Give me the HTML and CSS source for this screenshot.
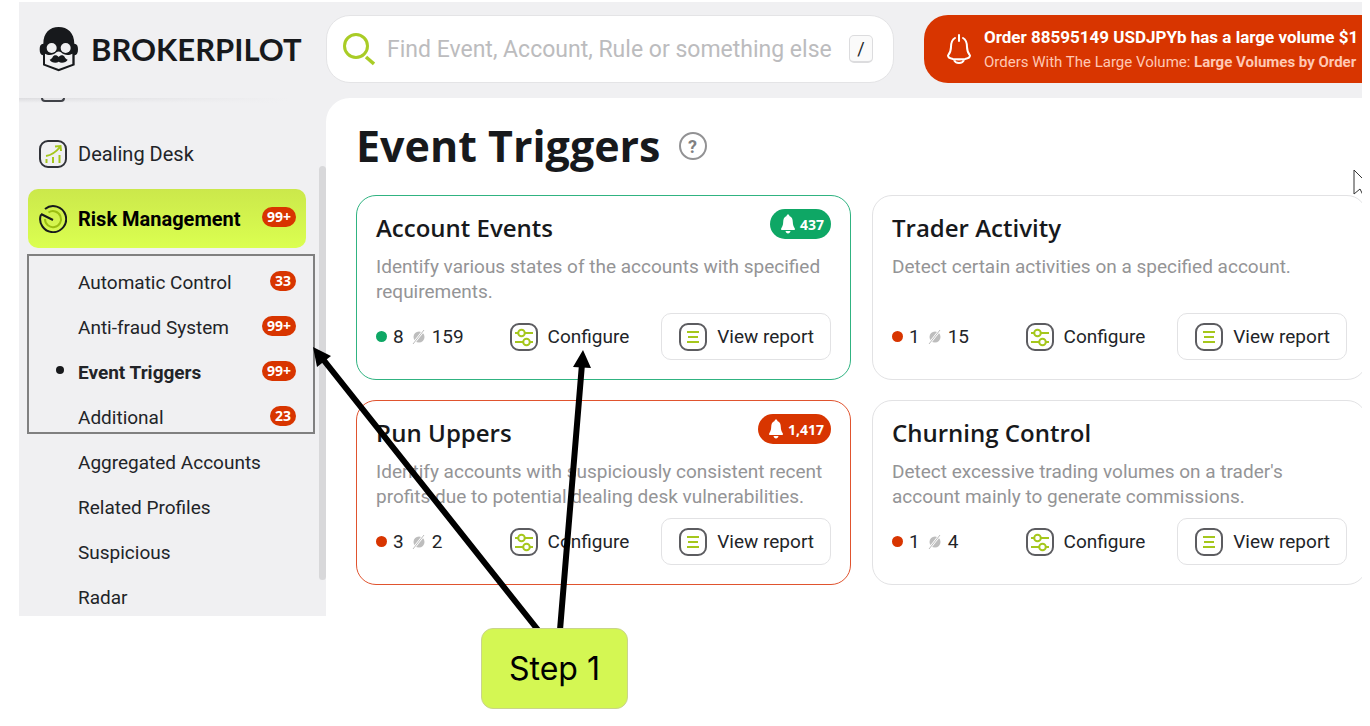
FILE: index.html
```html
<!doctype html>
<html lang="en">

<head>
    <title>Event Triggers</title>
    <meta charset="UTF-8">
    <link rel="stylesheet" href="styles.css">
</head>

<body>
    <!-- shared icons -->
    <svg class="sprite" width="0" height="0" aria-hidden="true">
        <symbol id="configure" viewBox="0 0 28 28">
            <rect x="1" y="1" width="26" height="26" rx="8" fill="#fff" stroke="#5c5c60" stroke-width="2" />
            <g fill="none" stroke="#a5c71c" stroke-width="2">
                <path d="M5 10h3M15 10h8M5 19h8M20 19h3" />
                <circle cx="11.5" cy="10" r="3.3" />
                <circle cx="16.5" cy="19" r="3.3" />
            </g>
        </symbol>
        <symbol id="report" viewBox="0 0 28 28">
            <rect x="1" y="1" width="26" height="26" rx="8" fill="#fff" stroke="#5c5c60" stroke-width="2" />
            <path d="M8 9h12M9 14h10M8 19h12" stroke="#a5c71c" stroke-width="2" />
        </symbol>
        <symbol id="off" viewBox="0 0 14 16">
            <circle cx="7" cy="8" r="5.5" fill="#bdbdbd" />
            <path d="M1 15L12 1" stroke="#fff" stroke-width="2.4" />
            <path d="M1 15L12 1" stroke="#bdbdbd" stroke-width="1" />
        </symbol>
        <symbol id="bell" viewBox="0 0 14 20">
            <path d="M7 0.5c1 0 1.4.7 1.4 1.6C11 3 11.7 5.5 11.8 8c.1 3 .7 4.500 2 6.200V16H.2v-1.800C1.500 12.500 2.100 11 2.200 8 2.300 5.500 3 3 5.600 2.100 5.600 1.200 6 .5 7 .5zM4.500 17h5c-.3 1.500-1.200 2.400-2.500 2.400S4.800 18.500 4.500 17z" fill="#fff" />
        </symbol>
    </svg>

    <div class="app">
        <header class="topbar">
            <a class="brand" href="#">
                <svg width="40" height="46" viewBox="118 76 120 136" aria-hidden="true">
                    <path d="M131 128C131 96 150 78 177 78s47 18 47 50c8 1 11 6 11 17s-3 17-10 18v30l-48 18-47-18v-30c-7-1-10-7-10-18s3-16 11-17z" fill="#17191c" />
                    <path d="M136 158c10 6 25 5 34-4 4-3 10-3 14 0 9 9 24 10 34 4v31l-41 15-41-15z" fill="#f0f0f2" />
                    <circle cx="156" cy="141" r="15" fill="#f0f0f2" />
                    <circle cx="198" cy="141" r="15" fill="#f0f0f2" />
                    <path d="M177 168c5-7 15-7 18 0 2 4 4 6 9 8-4 9-20 12-27 6-7 6-23 3-27-6 5-2 7-4 9-8 3-7 13-7 18 0z" fill="#17191c" />
                </svg>
                <span>BROKERPILOT</span>
            </a>
            <label class="search">
                <svg width="32" height="34" viewBox="0 0 32 34" fill="none" stroke="#a9cc26" stroke-width="3" aria-hidden="true">
                    <circle cx="13" cy="14" r="11.500" />
                    <path d="M23 25l8 7" stroke-width="3.500" />
                </svg>
                <input type="text" placeholder="Find Event, Account, Rule or something else" aria-label="Search">
                <kbd>/</kbd>
            </label>
            <div class="alert">
                <svg width="24" height="30" viewBox="0 0 24 30" fill="none" stroke="#fff" stroke-width="2" stroke-linecap="round" stroke-linejoin="round" aria-hidden="true">
                    <path d="M12 1v6M8 4C4.500 6 4 9 4 13c0 4-1 6-3 8.500C1 24 3 24.500 6 25c4 .5 8 .5 12 0 3-.5 5-1 5-3.500-2-2.500-3-4.500-3-8.500 0-4-.5-7-4-9M7 26c1.500 4 8.500 4 10 0" />
                </svg>
                <div class="alert-text">
                    <p class="alert-title">Order 88595149 USDJPYb has a large volume $1</p>
                    <p class="alert-sub">Orders With The Large Volume: <b>Large Volumes by Order</b></p>
                </div>
            </div>
        </header>

        <nav class="sidebar">
            <span class="peek"></span>
            <a class="item" href="#">
                <svg width="28" height="28" viewBox="0 0 28 28" fill="none" aria-hidden="true">
                    <rect x="1" y="1" width="26" height="26" rx="8" stroke="#303238" stroke-width="2" />
                    <path d="M7.500 23v-4M14 23v-6M20.500 23v-8M7 16c6-1 10-4 14-9M16 6.500l5.500-.5.5 5" stroke="#a5c71c" stroke-width="2" />
                </svg>
                <span>Dealing Desk</span>
            </a>
            <a class="item active" href="#">
                <svg width="28" height="28" viewBox="0 0 28 28" fill="none" aria-hidden="true">
                    <path d="M9.500 7.500A8 8 0 1 1 6 14" stroke="#9cbf12" stroke-width="2" />
                    <path d="M6 4a13 13 0 1 1-4 5.500M2 9l12 6" stroke="#17191c" stroke-width="2" />
                </svg>
                <span>Risk Management</span>
                <i class="count">99+</i>
            </a>
            <ul class="sub">
                <li><a href="#">Automatic Control <i class="count">33</i></a></li>
                <li><a href="#">Anti-fraud System <i class="count">99+</i></a></li>
                <li class="current"><a href="#">Event Triggers <i class="count">99+</i></a></li>
                <li><a href="#">Additional <i class="count">23</i></a></li>
                <li><a href="#">Aggregated Accounts</a></li>
                <li><a href="#">Related Profiles</a></li>
                <li><a href="#">Suspicious</a></li>
                <li><a href="#">Radar</a></li>
            </ul>
            <span class="scrollbar"></span>
        </nav>

        <main class="content">
            <div class="heading">
                <h1>Event Triggers</h1>
                <button class="help" type="button">?</button>
            </div>
            <div class="cards">
                <section class="card green">
                    <div class="card-top">
                        <h2>Account Events</h2>
                        <span class="pill"><svg width="14" height="20"><use href="#bell" /></svg>437</span>
                    </div>
                    <p>Identify various states of the accounts with specified requirements.</p>
                    <div class="card-bottom">
                        <div class="stats"><i class="dot"></i><span>8</span><svg width="14" height="16"><use href="#off" /></svg><span>159</span></div>
                        <button class="btn" type="button"><svg width="28" height="28"><use href="#configure" /></svg>Configure</button>
                        <button class="btn outlined" type="button"><svg width="28" height="28"><use href="#report" /></svg>View report</button>
                    </div>
                </section>
                <section class="card">
                    <div class="card-top">
                        <h2>Trader Activity</h2>
                    </div>
                    <p>Detect certain activities on a specified account.</p>
                    <div class="card-bottom">
                        <div class="stats"><i class="dot"></i><span>1</span><svg width="14" height="16"><use href="#off" /></svg><span>15</span></div>
                        <button class="btn" type="button"><svg width="28" height="28"><use href="#configure" /></svg>Configure</button>
                        <button class="btn outlined" type="button"><svg width="28" height="28"><use href="#report" /></svg>View report</button>
                    </div>
                </section>
                <section class="card red">
                    <div class="card-top">
                        <h2>Run Uppers</h2>
                        <span class="pill"><svg width="14" height="20"><use href="#bell" /></svg>1,417</span>
                    </div>
                    <p>Identify accounts with suspiciously consistent recent profits due to potential dealing desk vulnerabilities.</p>
                    <div class="card-bottom">
                        <div class="stats"><i class="dot"></i><span>3</span><svg width="14" height="16"><use href="#off" /></svg><span>2</span></div>
                        <button class="btn" type="button"><svg width="28" height="28"><use href="#configure" /></svg>Configure</button>
                        <button class="btn outlined" type="button"><svg width="28" height="28"><use href="#report" /></svg>View report</button>
                    </div>
                </section>
                <section class="card">
                    <div class="card-top">
                        <h2>Churning Control</h2>
                    </div>
                    <p>Detect excessive trading volumes on a trader's account mainly to generate commissions.</p>
                    <div class="card-bottom">
                        <div class="stats"><i class="dot"></i><span>1</span><svg width="14" height="16"><use href="#off" /></svg><span>4</span></div>
                        <button class="btn" type="button"><svg width="28" height="28"><use href="#configure" /></svg>Configure</button>
                        <button class="btn outlined" type="button"><svg width="28" height="28"><use href="#report" /></svg>View report</button>
                    </div>
                </section>
            </div>
        </main>
    </div>

    <!-- tutorial marks over the app -->
    <svg class="marks" width="1362" height="640" viewBox="0 0 1362 640" aria-hidden="true">
        <rect x="28" y="255" width="286" height="178" fill="none" stroke="#808080" stroke-width="2" />
        <path d="M538 630L322 358M560 630L582 364" stroke="#000" stroke-width="6" />
        <path d="M313 347l18 9-14 11zM583 350l8 18-18-1z" />
        <path d="M1354 170v24l6-5 4 8 4-2-4-8h7z" fill="#fff" stroke="#333" stroke-width="1" />
    </svg>
    <div class="step">Step 1</div>
</body>

</html>
```
FILE: styles.css
```css
* {
    box-sizing: border-box;
}

body {
    margin: 0;
    padding: 2px 8px 0 19px;
    background: #fff;
    color: #222428;
    font-family: Roboto, "Liberation Sans", sans-serif;
    font-size: 20px;
}

a {
    color: inherit;
    text-decoration: none;
}

h1, h2, p, ul {
    margin: 0;
    padding: 0;
}

h1, h2 {
    font-family: "Open Sans", sans-serif;
    color: #17191c;
}

svg {
    flex: none;
}

.sprite {
    position: absolute;
}

.app {
    display: grid;
    grid-template-columns: 307px minmax(0, 1fr);
    background: #f0f0f2;
    overflow: hidden;
}

/* top bar */
.topbar {
    grid-column: 1 / 3;
    display: flex;
    align-items: center;
    padding: 13px 0 15px;
}

.brand {
    flex: 0 0 307px;
    display: flex;
    align-items: center;
    gap: 12px;
    padding-left: 20px;
    font: bold 31px Lato, sans-serif;
    color: #17191c;
}

.search {
    flex: 0 0 568px;
    display: flex;
    align-items: center;
    height: 68px;
    padding: 0 20px 0 16px;
    border: 1px solid #e4e4e6;
    border-radius: 24px;
    background: #fff;
}

.search input {
    flex: 1;
    min-width: 0;
    margin-left: 12px;
    padding: 0;
    border: 0;
    outline: 0;
    font: 23px Roboto, sans-serif;
}

.search input::placeholder {
    color: #bcbcbe;
}

.search kbd {
    width: 24px;
    border: 1px solid #dcdcde;
    border-bottom-width: 2px;
    border-radius: 5px;
    background: #fafafa;
    font: 18px/25px Roboto, sans-serif;
    text-align: center;
}

.alert {
    flex: 1;
    display: flex;
    align-items: center;
    gap: 13px;
    min-width: 0;
    height: 68px;
    margin-left: 30px;
    padding-left: 23px;
    border-radius: 24px 0 0 24px;
    background: #d83500;
    color: #fff;
    white-space: nowrap;
    overflow: hidden;
}

.alert-title {
    font-size: 17px;
    line-height: 21px;
    font-weight: bold;
}

.alert-sub {
    padding-top: 4px;
    font-size: 15px;
    line-height: 20px;
    color: #ffc8b4;
}

/* sidebar */
.sidebar {
    position: relative;
    padding: 26px 20px 0 9px;
    background: linear-gradient(90deg, transparent, #f0f0f2 270px), linear-gradient(#dcdcdf, #f0f0f2 5px);
}

.peek {
    position: absolute;
    top: 0;
    left: 22px;
    width: 24px;
    height: 4px;
    border: 2px solid #404248;
    border-top: 0;
    border-radius: 0 0 8px 8px;
}

.item {
    display: flex;
    align-items: center;
    gap: 11px;
    height: 59px;
    margin-bottom: 6px;
    padding: 0 10px 0 11px;
    border-radius: 10px;
}

.item.active {
    background: linear-gradient(#cbe84b, #dbff50);
    color: #000;
    font-weight: bold;
}

.count {
    margin: 0 0 3px auto;
    padding: 0 5px;
    border-radius: 10px;
    background: #d83500;
    color: #fff;
    font: bold 14px/20px "Open Sans", sans-serif;
}

.sub {
    margin: 12px 0 -5px;
    list-style: none;
    font-size: 19px;
}

.sub a {
    display: flex;
    align-items: center;
    height: 45px;
    padding: 0 10px 0 50px;
}

.current {
    position: relative;
    font-weight: bold;
}

.current::before {
    content: "";
    position: absolute;
    top: 16px;
    left: 28px;
    width: 8px;
    height: 8px;
    border-radius: 50%;
    background: #17191c;
}

.scrollbar {
    position: absolute;
    top: 68px;
    right: 0;
    bottom: 36px;
    width: 7px;
    border-radius: 4px;
    background: #d8d8da;
}

/* content */
.content {
    padding: 21px 0 31px 30px;
    border-top-left-radius: 24px;
    background: #fff;
}

.heading {
    display: flex;
    align-items: center;
    gap: 18px;
    margin-bottom: 22px;
}

h1 {
    font-size: 43px;
    line-height: 54px;
}

.help {
    width: 28px;
    height: 28px;
    padding: 0;
    border: 2px solid #929294;
    border-radius: 50%;
    background: none;
    color: #808082;
    font: bold 18px Roboto, sans-serif;
}

.cards {
    display: grid;
    grid-template-columns: 1fr 1fr;
    gap: 20px 21px;
    margin-right: -5px;
}

.card {
    padding: 13px 19px 19px;
    border: 1px solid #e2e2e4;
    border-radius: 20px;
}

.card.green {
    border-color: #30b381;
}

.card.red {
    border-color: #e0532e;
}

.card-top {
    display: flex;
    justify-content: space-between;
    align-items: flex-start;
}

h2 {
    font-size: 24px;
    line-height: 38px;
    font-weight: 600;
}

.pill {
    display: flex;
    align-items: center;
    gap: 5px;
    height: 30px;
    padding: 0 7px 0 11px;
    border-radius: 15px;
    background: #d83500;
    color: #fff;
    font: bold 14px "Open Sans", sans-serif;
}

.green .pill,
.green .dot {
    background: #0ea765;
}

.card p {
    min-height: 50px;
    margin: 7px 0 9px;
    font-size: 19px;
    line-height: 25px;
    color: #949496;
}

.card-bottom {
    display: flex;
    align-items: center;
}

.stats {
    flex: 1;
    display: flex;
    align-items: center;
    gap: 6px;
    font-size: 19px;
}

.stats svg {
    margin-left: 2px;
}

.dot {
    width: 11px;
    height: 11px;
    border-radius: 50%;
    background: #d83500;
}

.btn {
    display: flex;
    align-items: center;
    gap: 10px;
    height: 47px;
    padding: 0;
    border: 0;
    background: none;
    color: #222428;
    font: 19px Roboto, sans-serif;
}

.btn.outlined {
    margin-left: 32px;
    padding: 0 16px 0 17px;
    border: 1px solid #e2e2e4;
    border-radius: 10px;
}

/* tutorial marks */
.marks {
    position: absolute;
    top: 0;
    left: 0;
    pointer-events: none;
}

.step {
    position: absolute;
    top: 628px;
    left: 481px;
    padding: 0 27px;
    border: 1px solid #c9d48c;
    border-radius: 12px;
    background: #d4f753;
    color: #000;
    font: 32px/79px Inter, sans-serif;
}
```
